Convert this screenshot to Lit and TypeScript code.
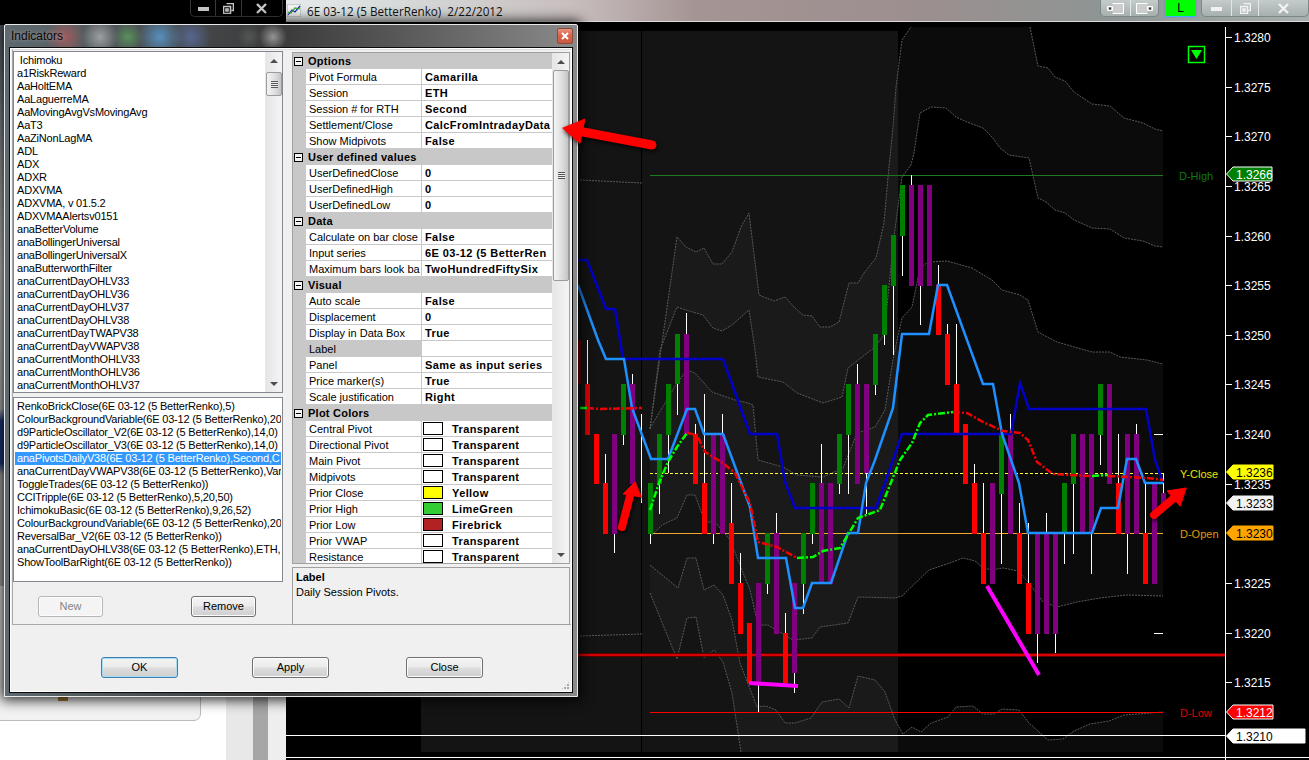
import { LitElement, css, html, svg } from "lit";
import { customElement } from "lit/decorators.js";

type P = number[][];

const pts = (l: P) => l.map((p) => p.join(",")).join(" ");

const INDICATORS = [
  " Ichimoku", "a1RiskReward", "AaHoltEMA", "AaLaguerreMA", "AaMovingAvgVsMovingAvg", "AaT3", "AaZiNonLagMA",
  "ADL", "ADX", "ADXR", "ADXVMA", "ADXVMA, v 01.5.2", "ADXVMAAlertsv0151", "anaBetterVolume",
  "anaBollingerUniversal", "anaBollingerUniversalX", "anaButterworthFilter", "anaCurrentDayOHLV33",
  "anaCurrentDayOHLV36", "anaCurrentDayOHLV37", "anaCurrentDayOHLV38", "anaCurrentDayTWAPV38",
  "anaCurrentDayVWAPV38", "anaCurrentMonthOHLV33", "anaCurrentMonthOHLV36", "anaCurrentMonthOHLV37",
];

const APPLIED = [
  "RenkoBrickClose(6E 03-12 (5 BetterRenko),5)",
  "ColourBackgroundVariable(6E 03-12 (5 BetterRenko),20",
  "d9ParticleOscillator_V2(6E 03-12 (5 BetterRenko),14,0)",
  "d9ParticleOscillator_V3(6E 03-12 (5 BetterRenko),14,0)",
  "anaPivotsDailyV38(6E 03-12 (5 BetterRenko),Second,C",
  "anaCurrentDayVWAPV38(6E 03-12 (5 BetterRenko),Var",
  "ToggleTrades(6E 03-12 (5 BetterRenko))",
  "CCITripple(6E 03-12 (5 BetterRenko),5,20,50)",
  "IchimokuBasic(6E 03-12 (5 BetterRenko),9,26,52)",
  "ColourBackgroundVariable(6E 03-12 (5 BetterRenko),20",
  "ReversalBar_V2(6E 03-12 (5 BetterRenko))",
  "anaCurrentDayOHLV38(6E 03-12 (5 BetterRenko),ETH,",
  "ShowToolBarRight(6E 03-12 (5 BetterRenko))",
];

type Row = { cat?: string; label?: string; value?: string; swatch?: string; sel?: boolean };

const ROWS: Row[] = [
  { cat: "Options" },
  { label: "Pivot Formula", value: "Camarilla" },
  { label: "Session", value: "ETH" },
  { label: "Session # for RTH", value: "Second" },
  { label: "Settlement/Close", value: "CalcFromIntradayData" },
  { label: "Show Midpivots", value: "False" },
  { cat: "User defined values" },
  { label: "UserDefinedClose", value: "0" },
  { label: "UserDefinedHigh", value: "0" },
  { label: "UserDefinedLow", value: "0" },
  { cat: "Data" },
  { label: "Calculate on bar close", value: "False" },
  { label: "Input series", value: "6E 03-12 (5 BetterRen" },
  { label: "Maximum bars look ba", value: "TwoHundredFiftySix" },
  { cat: "Visual" },
  { label: "Auto scale", value: "False" },
  { label: "Displacement", value: "0" },
  { label: "Display in Data Box", value: "True" },
  { label: "Label", value: "", sel: true },
  { label: "Panel", value: "Same as input series" },
  { label: "Price marker(s)", value: "True" },
  { label: "Scale justification", value: "Right" },
  { cat: "Plot Colors" },
  { label: "Central Pivot", value: "Transparent", swatch: "transparent" },
  { label: "Directional Pivot", value: "Transparent", swatch: "transparent" },
  { label: "Main Pivot", value: "Transparent", swatch: "transparent" },
  { label: "Midpivots", value: "Transparent", swatch: "transparent" },
  { label: "Prior Close", value: "Yellow", swatch: "#ffff00" },
  { label: "Prior High", value: "LimeGreen", swatch: "#32cd32" },
  { label: "Prior Low", value: "Firebrick", swatch: "#b22222" },
  { label: "Prior VWAP", value: "Transparent", swatch: "transparent" },
  { label: "Resistance", value: "Transparent", swatch: "transparent" },
];

// ichimoku style envelope lines, page coordinates
const L1: P = [[650,429],[661,350],[677,237],[686,247],[696,252],[704,248],[713,264],[722,264],[732,252],[741,227],[749,213],[759,295],[774,301],[785,297],[795,308],[803,315],[812,316],[820,327],[830,327],[839,322],[849,283],[858,283],[864,273],[876,258],[884,223],[888,177],[893,127],[896,87],[902,40],[911,27]];
const A: P = [[1030,27],[1038,66],[1048,68],[1055,77],[1065,81],[1074,92],[1092,104],[1110,106],[1124,118],[1143,123],[1155,129],[1163,131]];
const ED: P = [[650,429],[660,350],[677,307],[686,310],[703,315],[713,328],[722,331],[732,325],[749,310],[755,350],[758,377],[783,382],[797,393],[823,403],[842,397],[848,368],[875,347],[884,335],[894,237],[902,177],[911,165],[914,153],[920,113],[931,107],[946,108],[956,117],[967,122],[983,128],[992,137],[1000,148],[1009,155],[1029,158],[1038,198],[1046,202],[1055,210],[1065,213],[1074,220],[1092,228],[1110,229],[1124,238],[1143,241],[1155,246],[1163,247]];
const F: P = [[650,428],[677,383],[687,370],[695,373],[712,392],[735,400],[748,403],[753,405],[758,460],[783,467],[797,475],[823,477],[843,468],[857,433],[875,427],[885,410],[893,360],[897,340],[902,318],[912,307],[920,268],[928,262],[947,261],[972,268],[992,280],[1002,290],[1020,295],[1028,300],[1038,332],[1057,342],[1092,352],[1110,352],[1120,357],[1147,360],[1163,364]];
const G: P = [[650,537],[662,525],[677,518],[687,495],[695,495],[705,522],[715,522],[730,540],[750,590],[758,625],[768,625],[793,640],[812,638],[820,627],[848,623],[858,597],[895,598],[902,596],[929,570],[950,563],[963,558],[975,561],[983,568],[992,570],[1003,568],[1018,571],[1028,582],[1043,602],[1057,607],[1077,602],[1100,598],[1127,595],[1163,596]];
const H: P = [[650,565],[678,588],[687,558],[696,558],[704,590],[714,585],[723,595],[732,620],[740,663],[757,707],[766,706],[776,710],[785,723],[795,723],[811,718],[822,702],[839,699],[849,708],[858,676],[875,680],[885,692],[895,720],[903,734],[912,727],[921,732],[931,723],[948,717],[956,707],[973,706],[983,714],[994,714],[1002,709],[1019,710],[1029,723],[1048,740],[1063,739],[1074,731],[1090,724],[1109,721],[1124,715],[1163,712]];
const I: P = [[650,593],[677,659],[687,618],[696,617],[704,658],[714,650],[723,662],[732,693],[741,752]];
const LEFT1: P = [[580,180],[642,183]];
const LEFT2: P = [[580,636],[642,634]];

const DARK_BLUE: P = [[578,260],[587,260],[606,309],[615,309],[620,340],[623,359],[723,359],[750,434],[777,434],[785,482],[795,508],[876,508],[893,460],[902,434],[1011,434],[1020,383],[1029,409],[1146,409],[1152,443],[1155,460],[1163,483]];
const LIGHT_BLUE: P = [[578,285],[598,340],[606,359],[624,359],[632,408],[651,459],[668,459],[687,409],[695,409],[704,434],[723,434],[750,507],[758,558],[786,558],[795,608],[803,608],[812,583],[831,583],[848,533],[858,533],[866,483],[875,460],[893,408],[902,334],[929,334],[938,285],[947,285],[983,384],[993,384],[1002,434],[1019,483],[1028,533],[1092,533],[1101,508],[1118,508],[1127,459],[1136,459],[1145,483],[1163,483]];

const DASH_DOT: [string, P][] = [
  ["#00ff00", [[580,408],[587,408]]],
  ["#f00000", [[587,408],[600,409],[642,408]]],
  ["#00ff00", [[650,510],[659,483],[668,462],[677,447],[687,433]]],
  ["#f00000", [[687,433],[697,435],[705,452],[723,463],[735,473],[750,503],[758,542],[777,547],[797,558]]],
  ["#00ff00", [[797,558],[813,557],[823,551],[840,548],[858,518],[880,510],[900,460],[912,443],[920,423],[928,415],[953,412]]],
  ["#f00000", [[953,412],[967,413],[983,422],[1003,431],[1020,433],[1028,440],[1037,462],[1053,474],[1090,476]]],
  ["#00ff00", [[1092,476],[1108,475]]],
  ["#f00000", [[1108,476],[1147,478],[1163,480]]],
];

// x, colour, body top, body bottom, wick top, wick bottom
const R = "#ff0000", K = "#008000", V = "#800080";
const BARS: [number, string, number, number, number, number][] = [
  [578,"#7a0000",340,384,0,0],[587,"#e00000",384,435,340,435],[596,R,434,484,0,0],[605,R,483,534,454,534],[614,V,434,534,434,553],
  [623,K,384,435,384,445],[632,V,384,484,374,484],[650,K,483,534,483,544],[659,K,434,484,434,514],
  [668,K,384,435,384,473],[677,K,334,384,334,415],[686,V,334,434,313,434],[695,R,434,484,424,484],
  [704,R,483,534,394,534],[713,V,434,534,434,544],[722,V,434,534,414,534],[731,R,523,584,483,584],
  [740,R,583,634,553,634],[749,R,623,683,0,0],[758,V,583,683,583,712],[767,K,533,584,533,594],
  [776,V,533,634,513,634],[785,R,633,683,613,683],[794,V,583,673,583,693],[803,K,533,584,533,614],
  [812,K,483,534,483,544],[821,V,483,584,444,584],[830,V,483,584,0,0],[839,K,434,484,434,494],
  [848,K,384,435,384,494],[857,V,384,484,364,484],[866,V,384,473,384,514],[875,K,334,385,334,395],
  [884,K,285,335,285,345],[893,K,235,286,235,355],[902,K,185,236,185,276],[911,V,185,286,175,286],
  [920,V,185,286,185,325],[929,V,185,286,0,0],[938,R,285,335,265,335],[947,R,334,385,324,385],
  [956,R,384,434,324,434],[965,R,424,484,0,0],[974,R,483,534,464,534],[983,R,533,584,483,584],
  [992,V,483,584,0,0],[1001,K,435,494,435,564],[1010,V,434,534,414,534],[1019,R,533,584,503,584],
  [1028,R,583,634,523,634],[1037,V,533,634,533,663],[1046,V,533,634,513,634],[1055,V,533,634,533,653],
  [1064,K,483,534,483,564],[1073,K,434,484,434,554],[1082,V,434,534,0,0],[1091,V,434,534,434,574],
  [1100,K,384,435,384,465],[1109,V,384,484,0,0],[1118,R,483,534,434,534],[1127,V,434,534,434,574],
  [1136,V,434,534,424,534],[1145,R,533,584,483,584],[1154,V,483,584,0,0],[1163,V,493,510,473,493],
];

const TICKS = [
  ["1.3280", 37], ["1.3275", 87], ["1.3270", 136], ["1.3265", 186], ["1.3260", 236], ["1.3255", 285],
  ["1.3250", 335], ["1.3245", 384], ["1.3240", 434], ["1.3235", 484], ["1.3225", 583], ["1.3220", 633], ["1.3215", 682],
] as [string, number][];

const MARKERS = [
  { t: "1.3266", y: 174, w: 46, bg: "#008000", fg: "#fff", stroke: "#fff" },
  { t: "1.3236", y: 472, w: 47, bg: "#ffff00", fg: "#000", stroke: "#ffff00" },
  { t: "1.3233", y: 503, w: 47, bg: "#f2f2f2", fg: "#000", stroke: "#f2f2f2" },
  { t: "1.3230", y: 533, w: 47, bg: "#ffa500", fg: "#000", stroke: "#ffa500" },
  { t: "1.3212", y: 712, w: 47, bg: "#ff0000", fg: "#fff", stroke: "#fff" },
  { t: "1.3210", y: 736, w: 79, bg: "#fff", fg: "#000", stroke: "#fff" },
];

const SIDE_LABELS = [
  ["D-High", 1179, 180, "#0f7a0f"],
  ["Y-Close", 1180, 478, "#e6e600"],
  ["D-Open", 1180, 538, "#e09a10"],
  ["D-Low", 1180, 717, "#e00000"],
] as [string, number, number, string][];

@customElement("app-root")
export class AppRoot extends LitElement {
  static styles = css`
    :host {
      display: block;
      position: relative;
      width: 1309px;
      height: 760px;
      overflow: hidden;
      background: #000;
      font-family: "Liberation Sans", Arial, sans-serif;
      font-size: 11px;
      color: #000;
    }

    /* what is left of the desktop behind the windows */
    .desk {
      position: absolute;
      left: 0;
      top: 25px;
      width: 286px;
      height: 735px;
      background: #fff;
    }
    .desk-strip {
      position: absolute;
      left: 0;
      top: 0;
      width: 6px;
      height: 600px;
      background: linear-gradient(#55606c 0, #8a8f96 14%, #d8d8d8 40%, #c4c8cc 64%, #1d3f86 66%, #1d3f86 73%, #b8b8b8 75%);
    }
    .desk-card {
      position: absolute;
      left: -10px;
      top: 560px;
      width: 209px;
      height: 134px;
      background: #f2f2f2;
      border: 1px solid #bbb;
      border-radius: 7px;
    }
    .desk-gold {
      position: absolute;
      left: 58px;
      top: 672px;
      width: 10px;
      height: 4px;
      background: #a87c30;
    }
    .desk-cols {
      position: absolute;
      left: 226px;
      top: 660px;
      width: 60px;
      height: 75px;
      background: linear-gradient(90deg, #e8e8e8 0 27px, #a6a6a6 27px 42px, #eeeeee 42px);
    }

    .win-ctrl {
      position: absolute;
      left: 190px;
      top: 0;
      width: 93px;
      height: 17px;
      display: flex;
      border: 1px solid #3a3a3a;
      border-top: none;
      border-radius: 0 0 5px 5px;
      box-sizing: border-box;
    }
    .win-ctrl .cell {
      display: flex;
      align-items: center;
      justify-content: center;
      border-right: 1px solid #3a3a3a;
    }
    .win-ctrl .cell:last-child {
      border-right: none;
    }

    /* chart window */
    .chart-win {
      position: absolute;
      left: 286px;
      top: 0;
      width: 1023px;
      height: 760px;
      display: flex;
      flex-direction: column;
    }
    .chart-bar {
      height: 21px;
      flex: none;
      display: flex;
      align-items: flex-start;
      border-bottom: 1px solid #dcdcdc;
      background: linear-gradient(90deg, #e6eaea 0, #d6d8d8 12%, #c8bebe 28%, #a59494 40%, #9c8f8f 62%, #8e9594 80%, #a7b0ae 100%);
    }
    .chart-icon {
      margin: 4px 0 0 1px;
      flex: none;
    }
    .chart-title {
      margin: 3px 0 0 6px;
      font-family: "Open Sans", sans-serif;
      font-size: 11.7px;
      line-height: 16px;
      color: #111;
      white-space: pre;
    }
    .bar-tools {
      margin-left: auto;
      display: flex;
      gap: 6px;
      align-items: flex-start;
    }
    .tool-group {
      display: flex;
      height: 17px;
      border: 1px solid #7d8786;
      border-top: none;
      border-radius: 0 0 5px 5px;
      box-sizing: border-box;
      background: linear-gradient(#c4cccb, #a6b0ae);
    }
    .tool-group .cell {
      display: flex;
      align-items: center;
      justify-content: center;
      border-right: 1px solid #e3e8e7;
    }
    .tool-group .cell:last-child {
      border-right: none;
    }
    .live {
      width: 31px;
      height: 17px;
      margin-right: -1px;
      box-sizing: border-box;
      background: #00ff00;
      border: 1px solid #35b8ff;
      border-top: none;
      box-shadow: 0 0 1px #6a4fff;
      text-align: center;
      font-size: 12px;
      line-height: 16px;
    }
    .chart-svg {
      display: block;
      flex: none;
    }
    .chart-svg text {
      font-family: "Liberation Sans", Arial, sans-serif;
      font-size: 12px;
    }
    .chart-svg text.side {
      font-size: 11px;
    }

    /* indicators dialog */
    .dialog {
      position: absolute;
      left: 4px;
      top: 24px;
      width: 574px;
      height: 673px;
      box-sizing: border-box;
      padding: 0 4px 3px 4px;
      display: flex;
      flex-direction: column;
      border: 1px solid #e8e8e8;
      border-radius: 2px 2px 0 0;
      box-shadow: 0 0 13px 3px rgba(0, 0, 0, 0.85);
      background:
        radial-gradient(circle at 60px 12px, rgba(190, 90, 90, 0.7), transparent 20px),
        radial-gradient(circle at 95px 12px, rgba(190, 190, 190, 0.7), transparent 18px),
        radial-gradient(circle at 123px 12px, rgba(90, 160, 90, 0.8), transparent 15px),
        radial-gradient(circle at 155px 12px, rgba(90, 150, 200, 0.9), transparent 22px),
        radial-gradient(circle at 186px 12px, rgba(90, 110, 160, 0.8), transparent 20px),
        radial-gradient(circle at 244px 12px, rgba(90, 90, 90, 0.8), transparent 12px),
        radial-gradient(circle at 268px 12px, rgba(170, 170, 170, 0.8), transparent 14px),
        linear-gradient(90deg, #5e6a70 0, #4a4f52 25%, #3a3a3a 48%, #5a5a5a 70%, #8a8a8a 100%);
    }
    .dialog-title {
      height: 22px;
      flex: none;
      display: flex;
      align-items: center;
      justify-content: space-between;
      padding: 0 0 0 2px;
    }
    .dialog-title span {
      font-size: 12px;
      color: #0e0505;
      text-shadow: 0 0 4px rgba(255, 255, 255, 0.45);
    }
    .dialog-close {
      width: 16px;
      height: 16px;
      box-sizing: border-box;
      border: 1px solid #8c4a3a;
      border-radius: 2px;
      background: linear-gradient(#e8907c, #d8634a 50%, #c85a3e);
      display: flex;
      align-items: center;
      justify-content: center;
    }
    .client {
      flex: 1;
      min-height: 0;
      display: flex;
      flex-direction: column;
      background: #f0f0f0;
      border: 1px solid #0c0c0c;
      box-shadow: inset 0 0 0 1px #fff;
    }
    .panel {
      height: 576px;
      margin: 1px 1px 0 2px;
      box-sizing: border-box;
      display: flex;
      border: 1px solid #a8a8a8;
      border-right: none;
      border-top-color: #dcdcdc;
      background: #f0f0f0;
    }
    .left-col {
      width: 270px;
      flex: none;
      padding-top: 1px;
      display: flex;
      flex-direction: column;
      gap: 4px;
    }
    .listbox {
      box-sizing: border-box;
      border: 1px solid #828790;
      background: #fff;
      display: flex;
      overflow: hidden;
    }
    .listbox.top {
      height: 342px;
    }
    .listbox.bottom {
      height: 185px;
    }
    .items {
      flex: 1;
      min-width: 0;
      padding: 2px 1px 0 1px;
    }
    .item {
      height: 13px;
      line-height: 13px;
      padding-left: 2px;
      white-space: pre;
      overflow: hidden;
      letter-spacing: -0.2px;
    }
    .item.sel {
      background: #3399ff;
      color: #fff;
    }
    .list-buttons {
      display: flex;
      gap: 88px;
      padding: 10px 0 0 25px;
    }
    .btn {
      box-sizing: border-box;
      width: 65px;
      height: 21px;
      border: 1px solid #707070;
      border-radius: 3px;
      background: linear-gradient(#f4f4f4 0, #ebebeb 48%, #dddddd 52%, #cfcfcf 100%);
      box-shadow: inset 0 0 0 1px #fcfcfc;
      font-size: 11px;
      line-height: 18px;
      text-align: center;
      color: #000;
    }
    .btn.off {
      border-color: #b4b8ba;
      background: #f4f4f4;
      color: #848484;
    }
    .btn.wide {
      width: 77px;
    }
    .btn.def {
      border-color: #3c7fb1;
      box-shadow: inset 0 0 0 1px #a8dcf4;
    }
    .right-col {
      margin-left: 9px;
      width: 278px;
      flex: none;
      display: flex;
      flex-direction: column;
      gap: 3px;
    }
    .grid {
      margin-top: 2px;
      height: 512px;
      flex: none;
      box-sizing: border-box;
      border: 1px solid #a0a0a0;
      display: flex;
      background: #f0f0f0;
    }
    .rows {
      width: 259px;
      flex: none;
      height: 510px;
      overflow: hidden;
    }
    .row {
      height: 16px;
      box-sizing: border-box;
      display: grid;
      grid-template-columns: 13px 115px 1px 1fr;
      background: #fff;
      border-bottom: 1px solid #c8c8c8;
      line-height: 17px;
      white-space: nowrap;
    }
    .gutter {
      background: #c8c8c8;
    }
    .row .name {
      padding-left: 3px;
      overflow: hidden;
    }
    .row .name.sel {
      background: #c8c8c8;
    }
    .row .split {
      background: #c8c8c8;
    }
    .row .val {
      padding: 1px 0 0 3px;
      font-weight: bold;
      letter-spacing: 0.4px;
      overflow: hidden;
      display: flex;
      align-items: center;
    }
    .row .val.has-swatch {
      padding-left: 1px;
    }
    .swatch {
      flex: none;
      box-sizing: border-box;
      width: 20px;
      height: 13px;
      margin: -1px 9px 0 0;
      border: 1px solid #000;
    }
    .cat {
      height: 16px;
      display: flex;
      align-items: center;
      background: #c8c8c8;
      font-weight: bold;
      letter-spacing: 0.25px;
      padding-left: 1px;
      box-sizing: border-box;
      white-space: nowrap;
    }
    .toggle {
      box-sizing: border-box;
      width: 9px;
      height: 9px;
      margin-right: 5px;
      border: 1px solid #000;
      background: #f4f4f4;
      position: relative;
    }
    .toggle::after {
      content: "";
      position: absolute;
      left: 1px;
      right: 1px;
      top: 3px;
      height: 1px;
      background: #000;
    }
    .scroll {
      width: 17px;
      flex: none;
      display: flex;
      flex-direction: column;
      background: linear-gradient(90deg, #e6e6e6, #f4f4f4);
      border-left: 1px solid #e8e8e8;
      box-sizing: border-box;
    }
    .scroll .arrow {
      height: 17px;
      flex: none;
      display: flex;
      align-items: center;
      justify-content: center;
    }
    .tri-up,
    .tri-down {
      width: 0;
      height: 0;
      border-left: 4px solid transparent;
      border-right: 4px solid transparent;
    }
    .tri-up {
      border-bottom: 4px solid #4d4d4d;
    }
    .tri-down {
      border-top: 4px solid #4d4d4d;
    }
    .scroll .thumb {
      flex: none;
      box-sizing: border-box;
      border: 1px solid #9a9a9a;
      border-radius: 2px;
      background: linear-gradient(90deg, #f4f4f4, #dcdcdc 60%, #c4c4c4);
      display: flex;
      align-items: center;
      justify-content: center;
    }
    .grip {
      width: 7px;
      height: 7px;
      background: repeating-linear-gradient(#555 0 1px, #eee 1px 2px);
    }
    .scroll .rest {
      flex: 1;
    }
    .desc {
      height: 58px;
      flex: none;
      box-sizing: border-box;
      border: 1px solid #a0a0a0;
      padding: 2px 3px;
      line-height: 15px;
    }
    .desc b {
      display: block;
    }
    .actions {
      flex: 1;
      position: relative;
      display: flex;
      padding: 32px 0 0 91px;
    }
    .actions .apply {
      margin-left: 74px;
    }
    .actions .close {
      margin-left: 77px;
    }
    .size-grip {
      position: absolute;
      right: 2px;
      bottom: 2px;
      width: 9px;
      height: 9px;
      background: radial-gradient(circle at 1px 1px, #a8a8a8 1px, transparent 1px) 0 0 / 3px 3px;
      clip-path: polygon(100% 0, 100% 100%, 0 100%);
    }

    .overlay {
      position: absolute;
      left: 0;
      top: 0;
      pointer-events: none;
    }
    .arrow-red {
      filter: drop-shadow(1px 2px 2px rgba(0, 0, 0, 0.8));
    }
  `;

  private scrollbar(gap: number, thumb: number) {
    return html`<div class="scroll">
      <div class="arrow"><div class="tri-up"></div></div>
      <div style="height:${gap}px;flex:none"></div>
      <div class="thumb" style="height:${thumb}px"><div class="grip"></div></div>
      <div class="rest"></div>
      <div class="arrow"><div class="tri-down"></div></div>
    </div>`;
  }

  private renderRow(r: Row) {
    if (r.cat) {
      return html`<div class="cat"><div class="toggle"></div>${r.cat}</div>`;
    }
    return html`<div class="row">
      <div class="gutter"></div>
      <div class="name ${r.sel ? "sel" : ""}">${r.label}</div>
      <div class="split"></div>
      <div class="val ${r.swatch ? "has-swatch" : ""}">
        ${r.swatch ? html`<div class="swatch" style="background:${r.swatch}"></div>` : ""}${r.value}
      </div>
    </div>`;
  }

  private dashedLine(l: P) {
    return svg`<polyline points=${pts(l)} fill="none" stroke="#5a5a5a" stroke-width="1" stroke-dasharray="2 1"></polyline>`;
  }

  private renderChart() {
    const band1 = [...L1, ...A, ...[...ED].reverse()];
    const band2 = [...F, ...[...G].reverse()];
    const band3 = [...H, [1163, 752], [741, 752], ...[...I].reverse()];
    return html`<svg class="chart-svg" width="1023" height="738" viewBox="286 22 1023 738">
      <rect x="286" y="22" width="1023" height="738" fill="#000"></rect>
      <polygon points=${pts(band1)} fill="#fff" fill-opacity="0.045"></polygon>
      <polygon points=${pts(band2)} fill="#fff" fill-opacity="0.045"></polygon>
      <polygon points=${pts(band3)} fill="#fff" fill-opacity="0.045"></polygon>
      <rect x="421" y="31" width="477" height="721" fill="#2c2c2c" fill-opacity="0.45"></rect>
      <rect x="641" y="31" width="1" height="725" fill="#000"></rect>
      ${[L1, A, ED, F, G, H, I, LEFT1, LEFT2].map((l) => this.dashedLine(l))}

      <rect x="650" y="175" width="513" height="1" fill="#1f7a1f"></rect>
      <rect x="650" y="533" width="513" height="1" fill="#f0a830"></rect>
      <line x1="650" x2="1163" y1="473.5" y2="473.5" stroke="#ffff33" stroke-dasharray="3 2"></line>
      <rect x="577" y="653" width="648" height="4" fill="#5a0000"></rect>
      <rect x="577" y="654" width="648" height="2" fill="#d80000"></rect>
      <rect x="650" y="712" width="513" height="1" fill="#ff0000"></rect>
      <rect x="286" y="735" width="939" height="1" fill="#fff"></rect>
      <rect x="286" y="757" width="1023" height="1" fill="#fff"></rect>

      <rect x="641" y="414" width="1" height="89" fill="#fff"></rect>
      ${BARS.filter((b) => b[4]).map(
        (b) => svg`<rect x=${b[0]} y=${b[4]} width="1" height=${b[5] - b[4]} fill="#fff"></rect>`
      )}
      ${BARS.map(
        (b) => svg`<rect x=${b[0] - 2} y=${b[2]} width="5" height=${b[3] - b[2]} fill=${b[1]}></rect>`
      )}
      <rect x="1154" y="434" width="9" height="1" fill="#fff"></rect>
      <rect x="1154" y="633" width="9" height="1" fill="#fff"></rect>

      <polyline points=${pts(DARK_BLUE)} fill="none" stroke="#0000c8" stroke-width="2.5"></polyline>
      <polyline points=${pts(LIGHT_BLUE)} fill="none" stroke="#1e90ff" stroke-width="2.5"></polyline>
      ${DASH_DOT.map(
        (d) => svg`<polyline points=${pts(d[1])} fill="none" stroke=${d[0]} stroke-width="2.5" stroke-dasharray="7 2 2 2"></polyline>`
      )}
      <line x1="749" y1="683" x2="798" y2="686" stroke="#ff00ff" stroke-width="4"></line>
      <line x1="987" y1="586" x2="1039" y2="675" stroke="#ff00ff" stroke-width="4"></line>

      <rect x="1188.5" y="46.5" width="16" height="16" fill="none" stroke="#00ff00" stroke-width="1.5"></rect>
      <polygon points="1191,50 1202,50 1196.5,59" fill="#00ff00"></polygon>

      <rect x="1225" y="27" width="1" height="733" fill="#fff"></rect>
      ${TICKS.map(
        ([t, y]) => svg`<rect x="1226" y=${y} width="6" height="1" fill="#fff"></rect>
          <text x="1234" y=${y + 5} fill="#fff">${t}</text>`
      )}
      ${SIDE_LABELS.map(
        ([t, x, y, c]) => svg`<text class="side" x=${x} y=${y} fill=${c}>${t}</text>`
      )}
      ${MARKERS.map(
        (m) => svg`<polygon
            points="1226.5,${m.y} 1233,${m.y - 7} ${1226 + m.w},${m.y - 7} ${1226 + m.w},${m.y + 7} 1233,${m.y + 7}"
            fill=${m.bg} stroke=${m.stroke}></polygon>
          <text x="1236" y=${m.y + 5} fill=${m.fg}>${m.t}</text>`
      )}
    </svg>`;
  }

  private renderDialog() {
    return html`<div class="dialog">
      <div class="dialog-title">
        <span>Indicators</span>
        <div class="dialog-close">
          <svg width="8" height="8" viewBox="0 0 8 8">
            <path d="M1 1 7 7M7 1 1 7" stroke="#fff" stroke-width="2"></path>
          </svg>
        </div>
      </div>
      <div class="client">
        <div class="panel">
          <div class="left-col">
            <div class="listbox top">
              <div class="items">${INDICATORS.map((t) => html`<div class="item">${t}</div>`)}</div>
              ${this.scrollbar(3, 24)}
            </div>
            <div class="listbox bottom">
              <div class="items">
                ${APPLIED.map((t, i) => html`<div class="item ${i === 4 ? "sel" : ""}">${t}</div>`)}
              </div>
            </div>
            <div class="list-buttons">
              <div class="btn off">New</div>
              <div class="btn">Remove</div>
            </div>
          </div>
          <div class="right-col">
            <div class="grid">
              <div class="rows">${ROWS.map((r) => this.renderRow(r))}</div>
              ${this.scrollbar(0, 211)}
            </div>
            <div class="desc"><b>Label</b>Daily Session Pivots.</div>
          </div>
        </div>
        <div class="actions">
          <div class="btn wide def">OK</div>
          <div class="btn wide apply">Apply</div>
          <div class="btn wide close">Close</div>
          <div class="size-grip"></div>
        </div>
      </div>
    </div>`;
  }

  private winIcons(color: string, w: number[]) {
    const minIcon = svg`<rect x="0" y="4" width="11" height="4" fill=${color}></rect>`;
    const restore = svg`<path d="M3.5 .5h7v7h-2M.5 3.5h7v7h-7zM3 6h2v2H3z" fill="none" stroke=${color} stroke-width="1.6"></path>`;
    const close = svg`<path d="M1 1 10 10M10 1 1 10" stroke=${color} stroke-width="2.4"></path>`;
    return [minIcon, restore, close].map(
      (ic, i) => html`<div class="cell" style="width:${w[i]}px">
        <svg width="11" height="11" viewBox="0 0 11 11">${ic}</svg>
      </div>`
    );
  }

  render() {
    return html`
      <div class="desk">
        <div class="desk-strip"></div>
        <div class="desk-card"></div>
        <div class="desk-gold"></div>
        <div class="desk-cols"></div>
      </div>
      <div class="win-ctrl">${this.winIcons("#c8c8c8", [25, 25, 41])}</div>
      <div class="chart-win">
        <div class="chart-bar">
          <svg class="chart-icon" width="14" height="13" viewBox="0 0 14 13">
            <rect width="14" height="13" fill="#f2f2f2" stroke="#9aa" stroke-width="1"></rect>
            <path d="M1 11 5 6l3 2 5-6" fill="none" stroke="#22a" stroke-width="1.2"></path>
            <path d="M1 8 4 9l4-5 5 1" fill="none" stroke="#2a2" stroke-width="1.2"></path>
          </svg>
          <span class="chart-title">6E 03-12 (5 BetterRenko)  2/22/2012</span>
          <div class="bar-tools">
            <div class="tool-group">
              <div class="cell" style="width:29px">
                <svg width="17" height="11" viewBox="0 0 17 11">
                  <path d="M.5 3.5h5v4h-5zM5.5 .5h11v10h-11" fill="#ccc" stroke="#fff"></path>
                  <rect x="2" y="4.5" width="2" height="2" fill="#333"></rect>
                </svg>
              </div>
              <div class="cell" style="width:27px">
                <svg width="17" height="11" viewBox="0 0 17 11">
                  <path d="M11.5 .5h-11v10h11M11.5 3.5h5v4h-5z" fill="#ccc" stroke="#fff"></path>
                  <rect x="13" y="4.5" width="2" height="2" fill="#333"></rect>
                </svg>
              </div>
            </div>
            <div class="live">L</div>
            <div class="tool-group">${this.winIcons("#f2f2f2", [29, 26, 49])}</div>
          </div>
        </div>
        ${this.renderChart()}
      </div>
      ${this.renderDialog()}
      <svg class="overlay" width="1309" height="760" viewBox="0 0 1309 760">
        <g class="arrow-red" fill="#ff0000" stroke="#ff0000" stroke-linecap="round">
          <line x1="578" y1="131" x2="652" y2="145" stroke-width="9"></line>
          <polygon points="563,128 585,119 580,143" stroke-width="1"></polygon>
          <line x1="622" y1="527" x2="631" y2="492" stroke-width="8"></line>
          <polygon points="635,482 623,494 641,497" stroke-width="1"></polygon>
          <line x1="1154" y1="515" x2="1174" y2="498" stroke-width="8"></line>
          <polygon points="1186,488 1167,491 1180,506" stroke-width="1"></polygon>
        </g>
      </svg>
    `;
  }
}
